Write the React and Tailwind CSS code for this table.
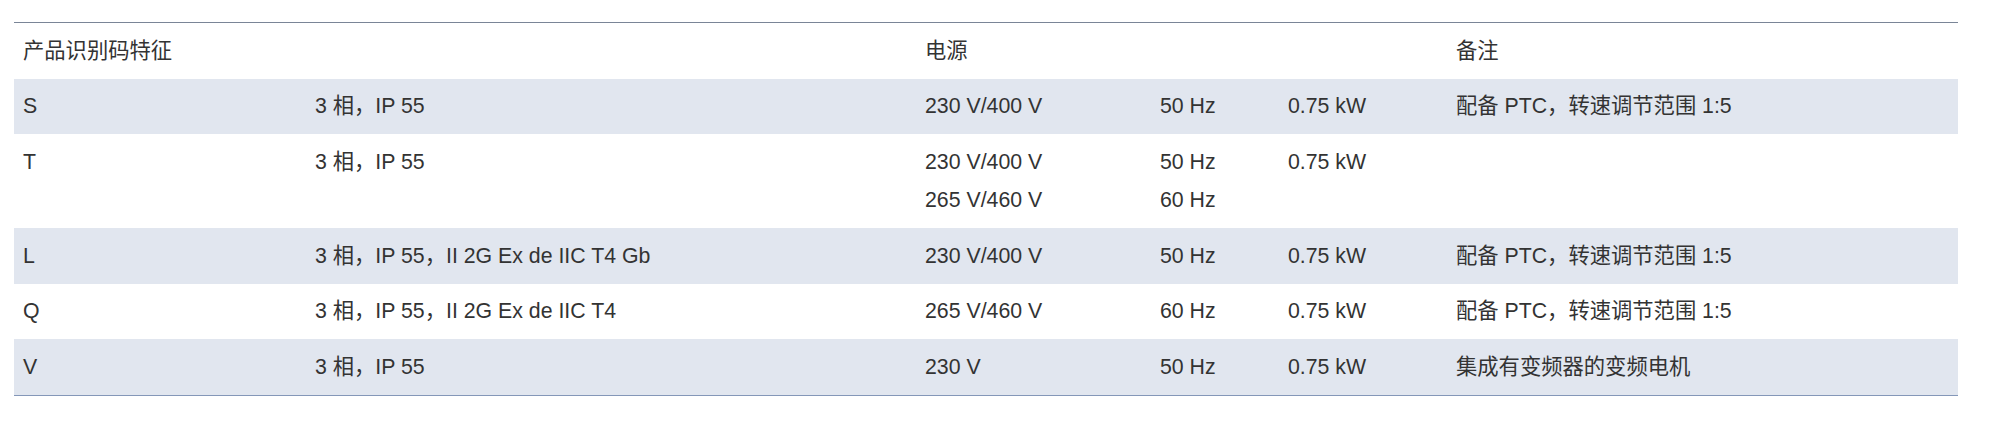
const rows = [
  {
    code: "S",
    type: "3 相，IP 55",
    power: [["230 V/400 V", "50 Hz", "0.75 kW"]],
    note: "配备 PTC，转速调节范围 1:5",
  },
  {
    code: "T",
    type: "3 相，IP 55",
    power: [
      ["230 V/400 V", "50 Hz", "0.75 kW"],
      ["265 V/460 V", "60 Hz", ""],
    ],
    note: "",
  },
  {
    code: "L",
    type: "3 相，IP 55，II 2G Ex de IIC T4 Gb",
    power: [["230 V/400 V", "50 Hz", "0.75 kW"]],
    note: "配备 PTC，转速调节范围 1:5",
  },
  {
    code: "Q",
    type: "3 相，IP 55，II 2G Ex de IIC T4",
    power: [["265 V/460 V", "60 Hz", "0.75 kW"]],
    note: "配备 PTC，转速调节范围 1:5",
  },
  {
    code: "V",
    type: "3 相，IP 55",
    power: [["230 V", "50 Hz", "0.75 kW"]],
    note: "集成有变频器的变频电机",
  },
];

const cell = "px-[9px] py-[8.5px] align-top text-left font-normal";

export default function App() {
  return (
    <div
      className="bg-white pt-[22px] pl-[14px] w-[1989px] h-[425px] text-[21.3px] leading-[38.5px] text-[#333333]"
      style={{ fontFamily: '"Liberation Sans", "Noto Sans CJK SC", sans-serif' }}
    >
      <table className="w-[1944px] table-fixed border-collapse border-t border-[#7a8597]">
        <colgroup>
          <col className="w-[292px]" />
          <col className="w-[610px]" />
          <col className="w-[235px]" />
          <col className="w-[128px]" />
          <col className="w-[168px]" />
          <col />
        </colgroup>
        <thead>
          <tr>
            <th colSpan={2} className={cell}>产品识别码特征</th>
            <th colSpan={3} className={cell}>电源</th>
            <th className={cell}>备注</th>
          </tr>
        </thead>
        <tbody>
          {rows.map((r, i) => (
            <tr
              key={r.code}
              className={
                (i % 2 === 0 ? "bg-[#e1e6ef] " : "bg-white ") +
                (i === rows.length - 1 ? "border-b border-[#8497b8]" : "")
              }
            >
              <td className={cell}>{r.code}</td>
              <td className={cell}>{r.type}</td>
              <td className={cell}>
                {r.power.map((p, j) => (
                  <div key={j} className="h-[38.5px]">{p[0]}</div>
                ))}
              </td>
              <td className={cell}>
                {r.power.map((p, j) => (
                  <div key={j} className="h-[38.5px]">{p[1]}</div>
                ))}
              </td>
              <td className={cell}>
                {r.power.map((p, j) => (
                  <div key={j} className="h-[38.5px]">{p[2]}</div>
                ))}
              </td>
              <td className={cell}>{r.note}</td>
            </tr>
          ))}
        </tbody>
      </table>
    </div>
  );
}
